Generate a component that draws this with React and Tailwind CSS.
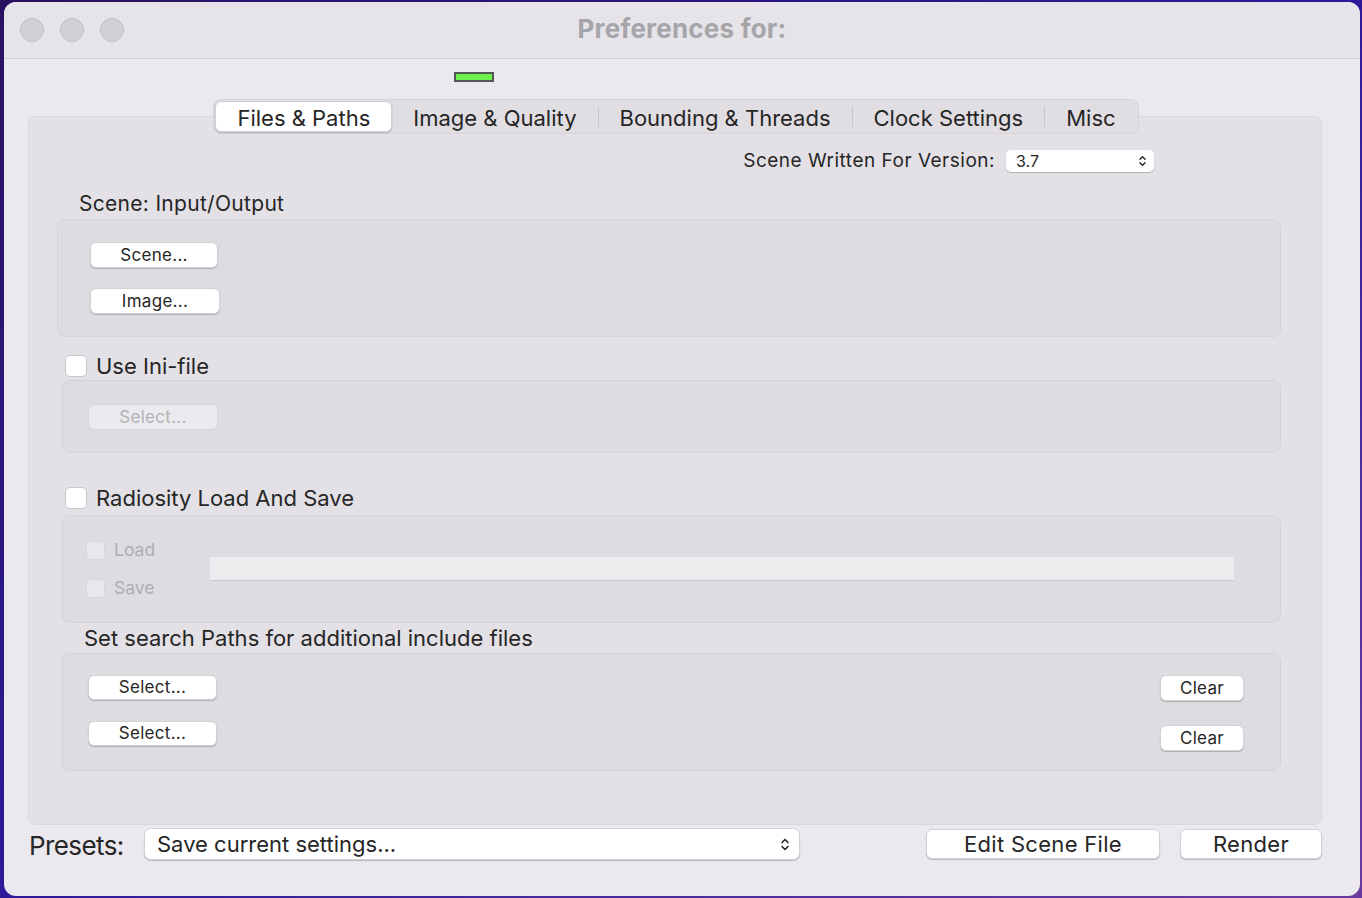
import { useState } from "react";

const font = { fontFamily: "Inter, 'Liberation Sans', sans-serif" };

function Chevrons({ className }) {
  return (
    <svg viewBox="0 0 10 14" className={className} fill="none" stroke="currentColor" strokeWidth="1.6" strokeLinecap="round" strokeLinejoin="round">
      <path d="M2 5 L5 2 L8 5" />
      <path d="M2 9 L5 12 L8 9" />
    </svg>
  );
}

function Btn({ children, className = "", disabled }) {
  return (
    <button
      className={`rounded-[6px] border-[0.5px] leading-none tracking-[0.3px] flex items-center justify-center ${
        disabled
          ? "bg-[#ebeaee] border-[#d6d5d9] text-[#b3b2b6]"
          : "bg-white border-[#d3d2d6] text-[#262626] shadow-[0_1px_1px_rgba(0,0,0,0.22)]"
      } ${className}`}
    >
      {children}
    </button>
  );
}

function Check({ checked, onClick, disabled, small }) {
  return (
    <div
      onClick={onClick}
      className={`${small ? "w-[19px] h-[19px] rounded-[4px]" : "w-[22px] h-[22px] rounded-[5px]"} shrink-0 border ${
        disabled ? "bg-[#e8e7eb] border-[#d8d7db]" : "bg-white border-[#c9c8cc]"
      } flex items-center justify-center text-[13px]`}
    >
      {checked ? "✓" : ""}
    </div>
  );
}

export default function App() {
  const [tab, setTab] = useState("Files & Paths");
  const [useIni, setUseIni] = useState(false);
  const [radiosity, setRadiosity] = useState(false);

  const tabs = ["Files & Paths", "Image & Quality", "Bounding & Threads", "Clock Settings", "Misc"];

  return (
    <div
      className="w-[1362px] h-[898px] overflow-hidden pt-[2px] pl-[4px] bg-gradient-to-br from-[#2a1160] via-[#2c1a9a] to-[#6a3aa0]"
      style={font}
    >
      <div className="w-[1356px] h-[894px] rounded-[12px] bg-[#ebe9ee] flex flex-col text-[#262626] overflow-hidden">
        {/* Title bar */}
        <div className="h-[57px] shrink-0 bg-[#e6e4e9] border-b border-[#cfcdd2] grid grid-cols-[1fr_auto_1fr] items-center">
          <div className="flex gap-[16px] pl-[16px]">
            <div className="w-[24px] h-[24px] rounded-full bg-[#d1d0d4] border border-[#bdbcc0]" />
            <div className="w-[24px] h-[24px] rounded-full bg-[#d1d0d4] border border-[#bdbcc0]" />
            <div className="w-[24px] h-[24px] rounded-full bg-[#d1d0d4] border border-[#bdbcc0]" />
          </div>
          <div className="text-[26px] leading-[30px] mb-[2px] font-bold text-[#a6a5a9] tracking-[0.2px]">Preferences for:</div>
          <div />
        </div>

        {/* status light */}
        <div className="mt-[13px] ml-[450px] w-[40px] h-[10px] bg-[#6cf04c] border-2 border-[#555555]" />

        {/* Tabs */}
        <div className="mt-[17px] flex justify-center pr-[12px] relative z-10">
          <div className="h-[35px] flex items-center rounded-[8px] bg-[#e0dee3] border border-[#d6d4d9] px-[1px] text-[22px]">
            {tabs.map((t, i) => (
              <div key={t} className="flex items-center">
                {i > 0 && tabs[i - 1] !== tab && t !== tab && (
                  <div className="w-px h-[20px] bg-[#c9c7cc]" />
                )}
                <div
                  onClick={() => setTab(t)}
                  className={`h-[31px] flex items-center pt-[3px] px-[21px] rounded-[6px] ${
                    t === tab ? "bg-white shadow-[0_1px_2px_rgba(0,0,0,0.2)] border-[0.5px] border-[#d0cfd3]" : ""
                  }`}
                >
                  {t}
                </div>
              </div>
            ))}
          </div>
        </div>

        {/* Panel */}
        <div className="-mt-[18px] ml-[24px] w-[1294px] h-[709px] shrink-0 rounded-[8px] bg-[#e3e1e6] border border-[#d9d7dc] flex flex-col">
          <div className="mt-[33px] h-[22px] flex justify-end items-center pr-[167px]">
            <span className="text-[19px] leading-[22px] tracking-[0.5px] mr-[11px]">Scene Written For Version:</span>
            <div className="w-[148px] h-[22px] bg-white rounded-[5px] shadow-[0_1px_1px_rgba(0,0,0,0.22)] flex items-center justify-between pl-[10px] pr-[7px] text-[16px]">
              <span>3.7</span>
              <Chevrons className="w-[9px] h-[12px]" />
            </div>
          </div>

          <div className="mt-[20px] ml-[50px] h-[24px] text-[21px] leading-[24px] tracking-[0.3px]">Scene: Input/Output</div>
          <div className="mt-[3px] ml-[28px] w-[1224px] h-[118px] rounded-[8px] bg-[#dedce1] border border-[#d5d3d8] flex flex-col pt-[22px] pl-[32px] gap-[20px]">
            <Btn className="w-[128px] h-[26px] text-[17px]">Scene...</Btn>
            <Btn className="w-[130px] h-[26px] text-[17px]">Image...</Btn>
          </div>

          <div className="mt-[17px] ml-[36px] flex items-center gap-[9px] h-[24px]">
            <Check checked={useIni} onClick={() => setUseIni(!useIni)} />
            <span className="text-[22px] leading-[24px]">Use Ini-file</span>
          </div>
          <div className="mt-[2px] ml-[33px] w-[1219px] h-[73px] rounded-[8px] bg-[#dedce1] border border-[#d5d3d8] pt-[23px] pl-[25px]">
            <Btn disabled className="w-[130px] h-[26px] text-[17px]">Select...</Btn>
          </div>

          <div className="mt-[33px] ml-[36px] flex items-center gap-[9px] h-[24px]">
            <Check checked={radiosity} onClick={() => setRadiosity(!radiosity)} />
            <span className="text-[22px] leading-[24px]">Radiosity Load And Save</span>
          </div>
          <div className="mt-[5px] ml-[33px] w-[1219px] h-[108px] rounded-[8px] bg-[#dedce1] border border-[#d5d3d8] flex items-center pl-[23px]">
            <div className="w-[124px] flex flex-col gap-[19px] text-[17.5px] text-[#aeadb1]">
              <div className="flex items-center gap-[9px] h-[19px]">
                <Check disabled small />
                <span>Load</span>
              </div>
              <div className="flex items-center gap-[9px] h-[19px]">
                <Check disabled small />
                <span>Save</span>
              </div>
            </div>
            <div className="w-[1024px] h-[24px] bg-[#ecebee] border-b border-[#c9c8cc]" />
          </div>

          <div className="mt-[3px] ml-[55px] h-[24px] text-[22px] leading-[24px]">Set search Paths for additional include files</div>
          <div className="mt-[3px] ml-[33px] w-[1219px] h-[118px] rounded-[8px] bg-[#dedce1] border border-[#d5d3d8] flex justify-between pl-[25px] pr-[36px] pt-[21px]">
            <div className="flex flex-col gap-[21px]">
              <Btn className="w-[129px] h-[25px] text-[17px]">Select...</Btn>
              <Btn className="w-[129px] h-[25px] text-[17px]">Select...</Btn>
            </div>
            <div className="flex flex-col gap-[24px]">
              <Btn className="w-[84px] h-[26px] text-[17px]">Clear</Btn>
              <Btn className="w-[84px] h-[26px] text-[17px]">Clear</Btn>
            </div>
          </div>
        </div>

        {/* Bottom bar */}
        <div className="mt-[2px] ml-[25px] mr-[38px] flex items-center h-[34px]">
          <span className="w-[115px] text-[26px] tracking-[-0.6px] mt-[3px]">Presets:</span>
          <div className="w-[656px] h-[32px] bg-white rounded-[7px] border-[0.5px] border-[#d3d2d6] shadow-[0_1px_1px_rgba(0,0,0,0.22)] flex items-center justify-between pl-[12px] pr-[9px] text-[22px]">
            <span>Save current settings...</span>
            <Chevrons className="w-[10px] h-[15px]" />
          </div>
          <div className="flex-1" />
          <Btn className="w-[234px] h-[30px] text-[22px]">Edit Scene File</Btn>
          <Btn className="ml-[20px] w-[142px] h-[30px] text-[22px]">Render</Btn>
        </div>
      </div>
    </div>
  );
}
